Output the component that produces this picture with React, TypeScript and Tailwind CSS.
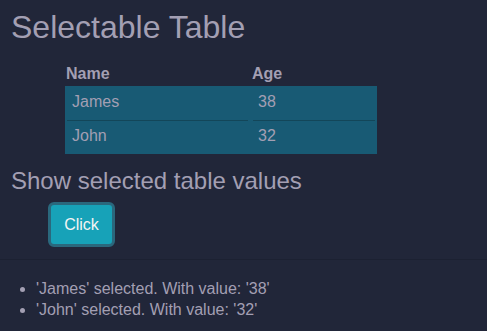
const rows = [
  { name: "James", age: "38" },
  { name: "John", age: "32" },
]

const App = () => {
  return (
    <div className="min-h-screen bg-[#212639] text-[#a39fb3] font-['Liberation_Sans',Arial,sans-serif] pt-[8px]">
      <h1 className="px-[11px] text-[32px] leading-[38px]">Selectable Table</h1>

      <table className="ml-[65px] mt-[17px] w-[312px] border-separate border-spacing-0 text-[16px]">
        <thead>
          <tr>
            <th className="w-[185px] h-[23px] pt-[2px] text-left align-top font-bold leading-[18px] pl-[1px]">Name</th>
            <th className="h-[23px] pt-[2px] text-left align-top font-bold leading-[18px] pl-[2px]">Age</th>
          </tr>
        </thead>
        <tbody>
          {rows.map((r, i) => (
            <tr key={r.name} className="bg-[#185a74]">
              <td className="p-0">
                <div className={i === 0 ? "h-[35px] flex items-center pl-[5px] pb-[2px] mx-[2px] border-b border-[#134659]" : "h-[33px] flex items-center pl-[7px] pb-[3px]"}>
                  {r.name}
                </div>
              </td>
              <td className="p-0">
                <div className={i === 0 ? "h-[35px] flex items-center pl-[5px] pb-[2px] ml-[3px] mr-[2px] border-b border-[#134659]" : "h-[33px] flex items-center pl-[8px] pb-[3px]"}>
                  {r.age}
                </div>
              </td>
            </tr>
          ))}
        </tbody>
      </table>

      <h2 className="px-[11px] mt-[12px] text-[24px] leading-[29px]">Show selected table values</h2>

      <button className="ml-[48px] mt-[7px] w-[67px] h-[45px] flex items-center justify-center rounded-[6px] border-[3px] border-[#2a687d] bg-[#17a2b8] text-[16px] text-[#f4f4f4]">
        Click
      </button>

      <hr className="mt-[12px] border-0 border-t border-[#1c2132]" />

      <ul className="mt-[18px] pl-[36px] list-disc text-[16px] leading-[21px]">
        {rows.map((r) => (
          <li key={r.name}>'{r.name}' selected. With value: '{r.age}'</li>
        ))}
      </ul>
    </div>
  )
}

export default App
